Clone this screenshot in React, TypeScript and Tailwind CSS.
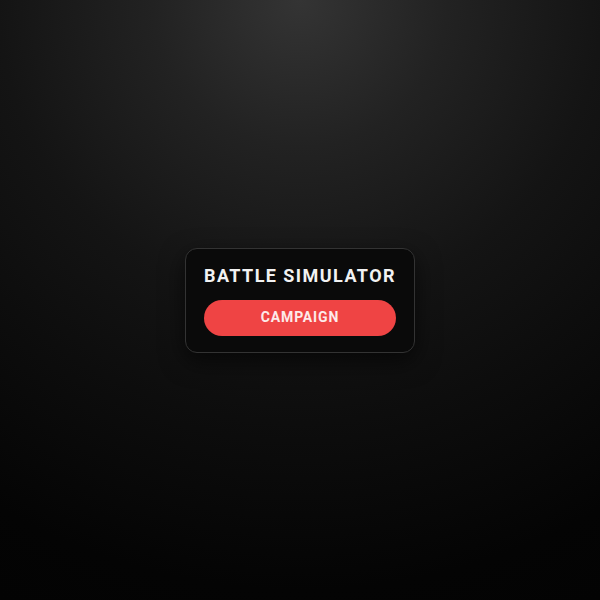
export default function App() {
  return (
    <div className="w-[600px] h-[600px] flex items-center justify-center bg-[radial-gradient(circle_farthest-corner_at_top,#343434_0%,#222222_22%,#141414_45%,#0d0d0d_63%,#040404_88%,#030303_100%)] font-['Roboto',sans-serif]">
      <div className="flex flex-col items-center gap-[12px] rounded-xl border border-[#333] bg-[#0a0a0a] px-[18px] pt-[15px] pb-[16px] shadow-[0_8px_24px_rgba(0,0,0,0.6)]">
        <h1 className="text-[18px] leading-[24px] font-bold tracking-[0.08em] text-[#f2f2f2]">BATTLE SIMULATOR</h1>
        <button className="w-[192px] h-[36px] rounded-full bg-[#ef4444] text-[14px] font-bold tracking-[0.06em] text-[#fdeaea]">
          CAMPAIGN
        </button>
      </div>
    </div>
  );
}
